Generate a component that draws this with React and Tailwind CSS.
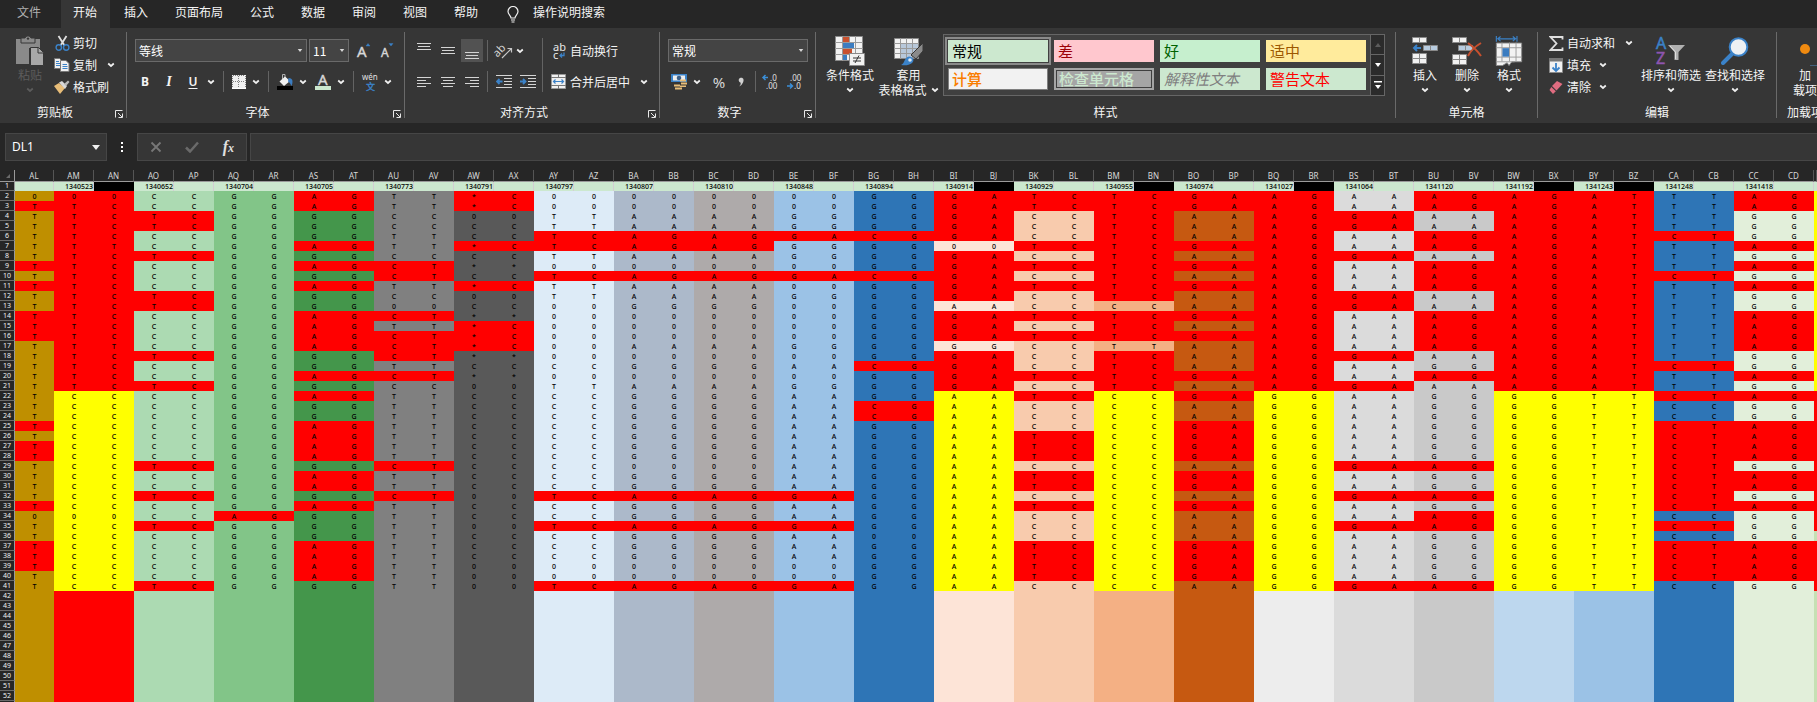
import React from 'react';

/* ---------- sheet data ---------- */

// Each track covers two columns; calls are run-length encoded from row 2 to row 41.
const TRACKS = [
  { cols: ['AM', 'AN'], pos: '1340523', black: true, base: 'bg-[#ff0000]', alt: true, calls: '00 TC4 TT TC9 TT TC4 CC12 00 CC7' },
  { cols: ['AO', 'AP'], pos: '1340652', base: 'bg-[#acdab2]', calls: 'CC2 TC2 CC2 TC CC3 TC2 CC4 TC CC2 TC CC7 TC CC2 TC CC2 TC CC5 TC' },
  { cols: ['AQ', 'AR'], pos: '1340704', base: 'bg-[#82c588]', calls: 'GG32 AG GG7' },
  { cols: ['AS', 'AT'], pos: '1340705', base: 'bg-[#44964b]', calls: 'AG2 GG3 AG GG AG GG AG GG2 AG4 GG2 AG GG AG GG2 AG4 GG AG2 GG AG GG3 AG4 GG' },
  { cols: ['AU', 'AV'], pos: '1340773', base: 'bg-[#808080]', calls: 'TT2 CC2 TT2 CC CT2 TT CC 00 CT TT CT3 TT CT CC TT7 CT TT2 CT TT9' },
  { cols: ['AW', 'AX'], pos: '1340791', base: 'bg-[#595959]', calls: '*C2 00 CC2 *C CC ** CC *C 00 CC ** *C3 ** CC ** 00 CC10 00 CC2 00 CC3 003' },
  { cols: ['AY', 'AZ'], pos: '1340797', base: 'bg-[#ddebf7]', calls: '002 TT2 TC2 TT 00 TC TT2 006 CC 00 TT CC10 TC CC2 TC CC3 002 TC' },
  { cols: ['BA', 'BB'], pos: '1340807', base: 'bg-[#acb9ca]', calls: '002 AA2 AG2 AA 00 AG AA2 GG 003 AA 00 GG 00 AA GG7 00 GG2 AG GG2 AG GG3 002 AG' },
  { cols: ['BC', 'BD'], pos: '1340810', base: 'bg-[#aeaaaa]', calls: '002 AA2 AG2 AA 00 AG AA2 GG 003 AA 00 GG 00 AA GG7 00 GG2 AG GG2 AG GG3 002 AG' },
  { cols: ['BE', 'BF'], pos: '1340848', base: 'bg-[#9bc2e6]', calls: '002 GG2 GA GG2 00 GA 00 GG 004 GG 00 AA 00 GG AA10 GA AA2 GA AA3 002 GA' },
  { cols: ['BG', 'BH'], pos: '1340894', base: 'bg-[#2e75b6]', calls: 'GG4 CG GG3 CG GG8 CG GG3 CG2 GG11 00 GG5' },
  { cols: ['BI', 'BJ'], pos: '1340914', black: true, base: 'bg-[#fde4d7]', alt: true, calls: 'GA5 00 GA5 AA GA3 GG GA4 AA20' },
  { cols: ['BK', 'BL'], pos: '1340929', base: 'bg-[#f8cbad]', calls: 'TC2 CC3 TC CC TC CC TC CC2 TC CC TC CC3 TC CC TC CC3 TC3 CC TC2 CC TC CC3 TC4 CC' },
  { cols: ['BM', 'BN'], pos: '1340955', black: true, base: 'bg-[#f4b084]', alt: true, calls: 'TC11 CC TC3 TT TC4 CC20' },
  { cols: ['BO', 'BP'], pos: '1340974', base: 'bg-[#c65911]', calls: 'GA2 AA3 GA AA GA AA GA AA2 GA AA GA AA3 GA AA GA AA2 GA4 AA GA2 AA GA AA3 GA4 AA' },
  { cols: ['BQ', 'BR'], pos: '1341027', black: true, base: 'bg-[#ededed]', alt: true, calls: 'AG20 GG20' },
  { cols: ['BS', 'BT'], pos: '1341064', base: 'bg-[#dbdbdb]', calls: 'AA2 GA2 AA2 GA AA3 GA2 AA4 GA AA2 GA AA7 GA AA2 GA AA2 GA AA5 GA' },
  { cols: ['BU', 'BV'], pos: '1341120', base: 'bg-[#c9c9c9]', calls: 'AG2 AA2 AG2 AA AG3 AA2 AG4 AA GG AG AA GG7 AG GG2 AG GG AG2 GG5 AG' },
  { cols: ['BW', 'BX'], pos: '1341192', black: true, base: 'bg-[#bdd7ee]', alt: true, calls: 'AG20 GG20' },
  { cols: ['BY', 'BZ'], pos: '1341243', black: true, base: 'bg-[#9bc2e6]', alt: true, calls: 'AT20 TT20' },
  { cols: ['CA', 'CB'], pos: '1341248', base: 'bg-[#2e75b6]', calls: 'TT4 CT TT3 CT TT8 CT TT2 CT CC2 CT9 CC CT CC CT4 CC' },
  { cols: ['CC', 'CD'], pos: '1341418', base: 'bg-[#e2efda]', calls: 'AG2 GG3 AG GG AG GG AG GG2 AG4 GG2 AG GG AG GG2 AG4 GG AG2 GG AG GG3 AG4 GG' },
];

const expand = (s) =>
  s.split(' ').flatMap((t) => Array(t.length > 2 ? Number(t.slice(2)) : 1).fill(t.slice(0, 2)));
const CALLS = TRACKS.map((t) => expand(t.calls));
const AL_RED = new Set([3, 9, 11, 14, 15, 16, 25, 27, 28, 33, 37, 38, 39]);
const RED = 'bg-[#ff0000]';
const YELLOW = 'bg-[#ffff00]';

function fill(track, call, row) {
  if (row > 41) return track.base;
  if (track.alt && row > 21) return YELLOW;
  return call[0] !== call[1] ? RED : track.base;
}

function lastFill(row) {
  if (row < 22) return YELLOW;
  if (row === 36 || row > 41) return 'bg-[#c6e0b4]';
  return RED;
}

function ColHead({ children }) {
  return (
    <th scope="col" className="h-3 border-r border-b border-r-[#555555] border-b-[#9a9a9a] p-0 text-center text-[8px] leading-[11px] font-normal text-[#d8d8d8]">
      {children}
    </th>
  );
}

function RowHead({ row, height }) {
  return (
    <th scope="row" className={`${height} border-r border-b border-r-[#9a9a9a] border-b-[#6a6a6a] bg-[#262626] p-0 text-center text-[7px] font-normal text-[#f0f0f0]`}>
      {row}
    </th>
  );
}

function Sheet() {
  const rows = Array.from({ length: 52 }, (_, i) => i + 2);
  return (
    <div className="min-h-0 flex-1 overflow-hidden">
      <table className="w-full min-w-[1816px] table-fixed border-separate border-spacing-0 font-['Noto_Sans',sans-serif] text-black">
        <colgroup>
          <col className="w-[15px]" />
          <col className="w-[39px]" />
          {TRACKS.flatMap((t) => t.cols).map((c) => <col key={c} className="w-10" />)}
          <col />
        </colgroup>
        <thead>
          <tr>
            <th aria-label="全选" className="h-3 border-r border-b border-[#9a9a9a] p-0">
              <svg viewBox="0 0 14 11" className="block h-[11px] w-[14px]"><path d="M10 4v4H6z" fill="#6a6a6a" /></svg>
            </th>
            <ColHead>AL</ColHead>
            {TRACKS.flatMap((t) => t.cols).map((c) => <ColHead key={c}>{c}</ColHead>)}
            <ColHead />
          </tr>
        </thead>
        <tbody>
          <tr className="bg-[#cce8cf] text-[7px] leading-[8px] font-medium">
            <RowHead row={1} height="h-[9px]" />
            <td className="border-r border-[#d4cdd4] p-0" />
            {TRACKS.map((t) => (
              <React.Fragment key={t.pos}>
                <td className="border-r border-[#d4cdd4] p-0 text-right">{t.pos}</td>
                <td className={t.black ? 'bg-black p-0' : 'border-r border-[#d4cdd4] p-0'} />
              </React.Fragment>
            ))}
            <td className="p-0" />
          </tr>
          {rows.map((row) => (
            <tr key={row} className="text-center text-[7px] leading-[9px] font-medium">
              <RowHead row={row} height="h-[10px]" />
              <td className={`p-0 ${AL_RED.has(row) ? RED : 'bg-[#bf8f00]'}`}>
                {row > 41 ? '' : row === 2 || row === 34 ? '0' : 'T'}
              </td>
              {TRACKS.map((t, i) => {
                const call = CALLS[i][row - 2] || '';
                const bg = fill(t, call, row);
                return (
                  <React.Fragment key={t.pos}>
                    <td className={`p-0 ${bg}`}>{call[0]}</td>
                    <td className={`p-0 ${bg}`}>{call[1]}</td>
                  </React.Fragment>
                );
              })}
              <td className={`p-0 ${lastFill(row)}`} />
            </tr>
          ))}
        </tbody>
      </table>
    </div>
  );
}

/* ---------- ribbon pieces ---------- */

function Chev({ dim }) {
  return (
    <svg viewBox="0 0 8 6" className="h-1.5 w-2 shrink-0">
      <path d="M1.2 1.5 4 4l2.8-2.5" fill="none" stroke={dim ? '#5c5c5c' : '#f0f0f0'} strokeWidth="1.7" />
    </svg>
  );
}

function Sep({ className = 'h-[21px]' }) {
  return <div className={`w-px shrink-0 bg-[#636363] ${className}`} />;
}

function Divider() {
  return <div className="mt-1 mb-[5px] w-px shrink-0 bg-[#6a6a6a]" />;
}

function Group({ label, launcher, className, children }) {
  return (
    <section aria-label={label} className={`flex shrink-0 flex-col ${className}`}>
      <div className="flex h-[74px] items-start">{children}</div>
      <div className="flex h-5 items-center">
        <span className={`flex-1 text-center ${launcher ? 'pr-[5px]' : ''}`}>{label}</span>
        {launcher && (
          <button type="button" aria-label={`${label}设置`} className="mr-[3px] pt-1">
            <svg viewBox="0 0 8 8" className="h-2 w-2" fill="none" stroke="#e8e8e8">
              <path d="M.5 7.5v-7h7M3 3l4 4M7.5 3.5v4h-4" />
            </svg>
          </button>
        )}
      </div>
    </section>
  );
}

function Split({ label, gap = 'gap-1.5', className = '', children }) {
  return (
    <button type="button" aria-label={label} className={`flex shrink-0 items-center ${gap} ${className}`}>
      {children}
      <Chev />
    </button>
  );
}

function Combo({ label, options, className }) {
  return (
    <div className={`relative flex h-[23px] ${className}`}>
      <select aria-label={label} className="w-full appearance-none border border-[#6a6a6a] bg-[#444444] pl-[3px] text-[12px] leading-5 text-white">
        {options.map((o) => <option key={o}>{o}</option>)}
      </select>
      <svg viewBox="0 0 6 4" className="pointer-events-none absolute top-[10px] right-[4px] h-[3px] w-[6px]"><path d="M0 0h6L3 4z" fill="#d8d8d8" /></svg>
    </div>
  );
}

function Lines({ rows, color = '#d4d4d4' }) {
  return (
    <svg viewBox="0 0 14 16" className="h-4 w-[14px]" shapeRendering="crispEdges" fill={color}>
      {rows.map(([x, y, w]) => <rect key={y} x={x} y={y} width={w} height="1" />)}
    </svg>
  );
}

function BigButton({ label, lines, chevInline, dim, className, children }) {
  return (
    <button type="button" aria-label={label} className={`mt-2 flex shrink-0 flex-col items-center whitespace-nowrap ${dim ? 'text-[#5c5c5c]' : ''} ${className}`}>
      <span className="mb-px flex h-[30px] items-center justify-center">{children}</span>
      <span className="leading-[15px]">{lines[0]}</span>
      {lines[1] ? (
        <span className="flex items-center gap-1 leading-[15px]">{lines[1]}{chevInline && <Chev />}</span>
      ) : (
        <span className="flex h-[15px] items-center"><Chev dim={dim} /></span>
      )}
    </button>
  );
}

function RowButton({ icon, chev, gap = 'gap-2', children }) {
  return (
    <button type="button" className={`flex h-[22px] items-center ${gap}`}>
      <span className="flex items-center gap-[3px]">
        <span className="flex w-4 justify-center">{icon}</span>
        <span>{children}</span>
      </span>
      {chev && <Chev />}
    </button>
  );
}

/* ---------- icons ---------- */

const PasteIcon = () => (
  <svg viewBox="0 0 28 30" className="h-[30px] w-7">
    <path d="M0 3h24v9H13v16H0z" fill="#8a8a8a" />
    <path d="M5 2h4a3.2 3.2 0 0 1 6 0h4v5H5z" fill="#8a8a8a" stroke="#363636" />
    <circle cx="12" cy="2.6" r="1.2" fill="#363636" />
    <path d="M14.5 11.5h8l5 5v13h-13z" fill="#a8a8a8" stroke="#363636" />
    <path d="M22 11.5V17h5.500" fill="none" stroke="#363636" />
  </svg>
);
const CutIcon = () => (
  <svg viewBox="0 0 15 16" className="h-4 w-[15px]" fill="none">
    <path d="M3.500 1 9.500 10.500M11.500 1 5.500 10.500" stroke="#e0e0e0" strokeWidth="1.800" />
    <circle cx="3.800" cy="12.500" r="2.700" stroke="#3b82c8" strokeWidth="1.400" />
    <circle cx="11.200" cy="12.500" r="2.700" stroke="#3b82c8" strokeWidth="1.400" />
  </svg>
);
const CopyIcon = () => (
  <svg viewBox="0 0 16 14" className="h-[14px] w-4">
    <path d="M.5.5h5l2.500 2.500v7.500h-7.500z" fill="#f0f0f0" stroke="#777" />
    <path d="M2 3.500h3M2 5.500h4M2 7.500h4" stroke="#3b82c8" />
    <path d="M6.500 2.500h5.500l3 3v8h-8.500z" fill="#f0f0f0" stroke="#777" />
    <path d="M8.500 6.500h4.500M8.500 8.500h5M8.500 10.500h5" stroke="#3b82c8" />
  </svg>
);
const PainterIcon = () => (
  <svg viewBox="0 0 16 14" className="h-[14px] w-4">
    <path d="M0 6 5 3l6 5-5 6z" fill="#e8bd78" />
    <path d="M5 2.500 8 1l5 5-2 3z" fill="#d8d8d8" />
    <path d="m10 4 4-3.500L15.500 2 12 6z" fill="#b8b8b8" />
  </svg>
);
const BordersIcon = () => (
  <svg viewBox="0 0 14 14" className="h-[14px] w-[14px]" shapeRendering="crispEdges">
    <path d="M0 0h14v14H0z" fill="#f0f0f0" />
    <path d="M1 .5h12M1 6.500h12M.5 1v11M6.500 1v11M13.500 1v11" stroke="#808080" strokeDasharray="1 1" />
    <path d="M0 13.500h14" stroke="#fff" />
  </svg>
);
const FillIcon = () => (
  <svg viewBox="0 0 16 16" className="h-4 w-4">
    <path d="M5.500 5V.5H8V5" fill="none" stroke="#b0b0b0" />
    <path d="M8 2.500 13 7l-6 5L2.500 7.500z" fill="#f0f0f0" />
    <path d="M11.500 4c4 0 5 3 3 8-1-2-1.500-3-3.500-4.500z" fill="#3b7cc0" />
    <path d="M0 12h16v4H0z" fill="#000" />
  </svg>
);
const CurrencyIcon = () => (
  <svg viewBox="0 0 16 16" className="h-4 w-4">
    <path d="M0 0h16v8H0z" fill="#3b82c8" /><path d="M2 1.500h12v5H2z" fill="#eee" />
    <circle cx="8" cy="4" r="2.300" fill="#3b5f88" />
    <path d="M9 5.500h6v2H9zM10 8.500h6v2h-6zM3 10.500h6v2H3zM4 13.500h7v2H4zM9 11.500h6v1.500H9z" fill="#e8bd78" />
  </svg>
);
const Decimal = ({ inc }) => (
  <svg viewBox="0 0 16 16" className="h-4 w-4 overflow-visible font-['Noto_Sans',sans-serif]" fill="#e0e0e0" fontSize="8">
    {inc ? (
      <>
        <path d="M6 3.500H1M3.500 1l-2.500 2.500 2.500 2.500" fill="none" stroke="#3b8fd8" strokeWidth="1.500" />
        <text x="8" y="7">.0</text><text x="4" y="15">.00</text>
      </>
    ) : (
      <>
        <path d="M1 12h5.500M4 9.500l2.500 2.500L4 14.500" fill="none" stroke="#3b8fd8" strokeWidth="1.500" />
        <text x="4" y="7">.00</text><text x="8" y="15">.0</text>
      </>
    )}
  </svg>
);
const Indent = ({ left }) => (
  <svg viewBox="0 0 16 14" className="h-[14px] w-4">
    <path d="M0 .5h16M8 3.500h8M8 6.500h8M8 9.500h8M0 12.500h16" stroke="#d4d4d4" />
    <path d={left ? 'M6.500 6.500H1M3.500 4 1 6.500 3.500 9' : 'M0 6.500h5.500M3 4l2.500 2.500L3 9'} fill="none" stroke="#3b82c8" strokeWidth="1.800" />
  </svg>
);
const MergeIcon = () => (
  <svg viewBox="0 0 16 16" className="h-4 w-4">
    <path d="M.5.5h14v14H.5z" fill="#f0f0f0" stroke="#999" />
    <path d="M0 3.500h15M0 11.500h15M7.500 0v3M7.500 12v3" stroke="#777" />
    <path d="M2.500 7.500h10M4.500 5.500l-2 2 2 2M10.500 5.500l2 2-2 2" fill="none" stroke="#3b82c8" strokeWidth="1.200" />
  </svg>
);
const WrapIcon = () => (
  <svg viewBox="0 0 13 16" className="h-4 w-[13px] overflow-visible font-['Noto_Sans',sans-serif]" fill="#e8e8e8" fontSize="11">
    <text x="0" y="8">ab</text><text x="0" y="16">c</text>
    <path d="M11 9.500v3H7M9 10.500l-2 2 2 2" fill="none" stroke="#3b82c8" strokeWidth="1.300" />
  </svg>
);
const OrientIcon = () => (
  <svg viewBox="0 0 16 16" className="h-4 w-4 overflow-visible font-['Noto_Sans',sans-serif]" fill="#d8d8d8" fontSize="11">
    <text x="-2" y="11" transform="rotate(-45 4 9)">ab</text>
    <path d="M6 15 15 6M11.500 5.500h4v4" fill="none" stroke="#c8c8c8" strokeWidth="1.200" />
  </svg>
);
const CondIcon = () => (
  <svg viewBox="0 0 30 30" className="h-[30px] w-[30px]">
    <path d="M.5.5h27v24H.5z" fill="#f2f2f2" stroke="#8a8a8a" />
    <path d="M0 6.500h28M0 12.500h28M0 18.500h28M7.500 0v25M14.500 0v25M20.500 0v25" stroke="#9a9a9a" fill="none" />
    <path d="M8 1h6v5H8zM8 13h9v5H8z" fill="#c8502e" /><path d="M8 7h11v5H8zM8 19h4v5H8z" fill="#3b7cc0" />
    <path d="M14.500 17.500h15v12h-15z" fill="#f2f2f2" stroke="#8a8a8a" />
    <path d="M18 22h8M18 25h8M24 19.500l-4 7.500" stroke="#333" />
  </svg>
);
const TableIcon = () => (
  <svg viewBox="0 0 30 30" className="h-[30px] w-[30px]">
    <path d="M.5 2.500h24v20H.5z" fill="#f2f2f2" stroke="#8a8a8a" />
    <path d="M7 8h17v14H7z" fill="#b8c8da" />
    <path d="M0 7.500h25M0 12.500h25M0 17.500h25M6.500 2v21M12.500 2v21M18.500 2v21" stroke="#9a9a9a" fill="none" />
    <path d="M29 7v8l-7 8-5-4z" fill="#8a8a8a" stroke="#363636" />
    <path d="M7 29c4-1 3-8 8-8.500 4 0 6 4 3 6.500s-7 2.500-11 2z" fill="#3b82c8" /><circle cx="16" cy="24" r="1.800" fill="#dceaf6" />
  </svg>
);
const Mini = ({ x, y, blue, n = 2 }) => (
  <g>
    <path d={`M${x + 0.5} ${y + 0.5}h${n * 7}v5h-${n * 7}z`} fill={blue ? '#b8cce0' : '#f2f2f2'} stroke="#8a8a8a" />
    <path d={`M${x + 7.5} ${y}v6`} stroke="#8a8a8a" />
  </g>
);
const InsertIcon = () => (
  <svg viewBox="0 0 26 28" className="h-7 w-[26px]">
    <Mini x={0} y={0} /><Mini x={11} y={8} blue /><Mini x={0} y={16} /><Mini x={0} y={21} />
    <path d="M9 11H2M5 8l-3 3 3 3" fill="none" stroke="#3b82c8" strokeWidth="2" />
  </svg>
);
const DeleteIcon = () => (
  <svg viewBox="0 0 30 28" className="h-7 w-[30px]">
    <Mini x={0} y={0} /><Mini x={6} y={8} blue /><Mini x={0} y={17} /><Mini x={0} y={22} />
    <path d="M16 6c4 3 9 7 13 13M29 6c-5 3-10 7-13 13" fill="none" stroke="#c8502e" strokeWidth="2" />
  </svg>
);
const FormatIcon = () => (
  <svg viewBox="0 0 28 32" className="h-[30px] w-7">
    <path d="M.5 0v6M22.500 0v6M2 3h19M5 .5 2 3l3 2.500M18 .5 21 3l-3 2.500" fill="none" stroke="#3b82c8" strokeWidth="1.200" />
    <path d="M.5 7.500h27v20H17l-3 4-2-3-5 3H.5z" fill="#f2f2f2" stroke="#8a8a8a" />
    <path d="M0 12.500h28M0 22.500h28M0 27.500h20M6.500 7v20M14.500 7v20M21.500 7v20" fill="none" stroke="#9a9a9a" />
    <path d="M7 13h7v9H7z" fill="#3b7cc0" />
  </svg>
);
const SumIcon = () => (
  <svg viewBox="0 0 15 15" className="h-[15px] w-[15px]"><path d="M13.500 3.500V1H1.500l6 6.500-6 6.500h12v-2.500" fill="none" stroke="#e0e0e0" strokeWidth="1.800" /></svg>
);
const DownIcon = () => (
  <svg viewBox="0 0 14 15" className="h-[15px] w-[14px]">
    <path d="M.5.5h13v14H.5z" fill="#f2f2f2" stroke="#8a8a8a" /><path d="M0 0h14v3.500H0z" fill="#777" />
    <path d="M7 5v8M3.500 9.500 7 13l3.500-3.500" fill="none" stroke="#3b82c8" strokeWidth="1.800" />
  </svg>
);
const EraserIcon = () => (
  <svg viewBox="0 0 14 13" className="h-[13px] w-[14px]">
    <path d="m8 0 5.500 3-6 6.500L3 5z" fill="#e06c80" /><path d="m2.300 6 4.500 4.200L4 13 .5 9z" fill="#e06c80" />
  </svg>
);
const SortIcon = () => (
  <svg viewBox="0 0 30 28" className="h-7 w-[30px] overflow-visible font-['Noto_Sans',sans-serif]" fontSize="16" strokeWidth=".5">
    <text x="0" y="12" fill="#3b82c8" stroke="#3b82c8">A</text><text x="0" y="27" fill="#8e55b0" stroke="#8e55b0">Z</text>
    <path d="M12 8h17l-6.500 7v8h-4v-8z" fill="#b0b0b0" /><path d="m14 9 5.500 6v7" fill="none" stroke="#e0e0e0" strokeWidth="1" />
  </svg>
);
const FindIcon = () => (
  <svg viewBox="0 0 28 28" className="h-7 w-7">
    <path d="m11 17-9 9" stroke="#3b82c8" strokeWidth="4" strokeLinecap="round" />
    <circle cx="17.500" cy="10" r="8.800" fill="#eef1f4" stroke="#3b82c8" strokeWidth="2" />
  </svg>
);

/* ---------- ribbon ---------- */

const TABS = ['插入', '页面布局', '公式', '数据', '审阅', '视图', '帮助'];

function TabBar() {
  return (
    <nav className="flex h-7 shrink-0 items-stretch gap-px whitespace-nowrap">
      <a href="#file" className="flex w-[60px] items-center pb-1 pl-[17px] text-[#b0b0b0]">文件</a>
      <a href="#home" aria-current="page" className="flex w-[49px] items-center bg-[#363636] pb-1 pl-3">开始</a>
      {TABS.map((t) => (
        <a key={t} href={`#${t}`} className="flex items-center px-[13px] pb-1">{t}</a>
      ))}
      <button type="button" className="ml-[15px] flex items-center gap-[14px] pb-1">
        <svg viewBox="0 0 12 17" className="mt-1 h-[17px] w-3" fill="none" stroke="#f0f0f0" strokeWidth="1.200">
          <path d="M4 12c0-2.500-3-3.500-3-6.500a5 5 0 0 1 10 0c0 3-3 4-3 6.500zM4 14h4M4.500 16h3" />
        </svg>
        操作说明搜索
      </button>
    </nav>
  );
}

const CELL = 'flex h-[22px] items-center px-1 text-left text-[15px] leading-[22px] whitespace-nowrap';

function Gallery() {
  return (
    <div className="mt-1.5 flex h-[62px] border border-[#666666] bg-[#404040]">
      <div className="grid grid-cols-[repeat(4,100px)] content-start gap-1.5 px-1 pt-[5px]">
        <button type="button" className={`${CELL} bg-[#cce8cf] text-black outline-2 outline-offset-1 outline-[#8a8a8a]`}>常规</button>
        <button type="button" className={`${CELL} bg-[#ffc7ce] text-[#9c0006]`}>差</button>
        <button type="button" className={`${CELL} bg-[#c6efce] text-[#006100]`}>好</button>
        <button type="button" className={`${CELL} bg-[#ffeb9c] text-[#9c5700]`}>适中</button>
        <button type="button" className={`${CELL} border border-[#7f7f7f] bg-[#f2f2f2] !px-[3px] font-medium text-[#fa7d00]`}>计算</button>
        <button type="button" className={`${CELL} border-3 border-double border-[#3f3f3f] bg-[#a5a5a5] !px-0.5 font-medium !leading-4 text-[#cce8cf] outline outline-[#a5a5a5] -outline-offset-1`}>检查单元格</button>
        <button type="button" className={`${CELL} bg-[#cce8cf] text-[#7f7f7f] italic`}>解释性文本</button>
        <button type="button" className={`${CELL} bg-[#cce8cf] text-[#ff0000]`}>警告文本</button>
      </div>
      <div className="flex w-[14px] flex-col divide-y divide-[#666666] border-l border-[#666666] bg-[#2b2b2b]">
        <button type="button" aria-label="上一行" className="flex flex-1 items-center justify-center"><svg viewBox="0 0 6 4" className="h-1 w-1.5"><path d="M3 0 6 4H0z" fill="#5c5c5c" /></svg></button>
        <button type="button" aria-label="下一行" className="flex flex-1 items-center justify-center"><svg viewBox="0 0 6 4" className="h-1 w-1.5"><path d="M0 0h6L3 4z" fill="#fff" /></svg></button>
        <button type="button" aria-label="更多样式" className="flex flex-1 items-center justify-center"><svg viewBox="0 0 8 8" className="h-2 w-2"><path d="M0 0h8v1.500H0zM1 4h6L4 8z" fill="#fff" /></svg></button>
      </div>
    </div>
  );
}

function Ribbon() {
  return (
    <div className="flex h-[95px] shrink-0 overflow-hidden bg-[#363636] whitespace-nowrap">
      <Group label="剪贴板" launcher className="w-[126px]">
        <BigButton label="粘贴" lines={['粘贴']} dim className="ml-4 w-7"><PasteIcon /></BigButton>
        <div className="ml-2.5 flex flex-col items-start pt-1">
          <RowButton icon={<CutIcon />}>剪切</RowButton>
          <RowButton icon={<CopyIcon />} chev gap="gap-2.5">复制</RowButton>
          <RowButton icon={<PainterIcon />}>格式刷</RowButton>
        </div>
      </Group>
      <Divider />
      <Group label="字体" launcher className="w-[277px]">
        <div className="flex flex-col gap-2 pt-[11px]">
          <div className="flex h-[23px] items-center gap-0.5 pl-2">
            <Combo label="字体名称" options={['等线']} className="w-[172px]" />
            <Combo label="字号" options={['11']} className="w-10" />
            <button type="button" aria-label="增大字号" className="ml-1.5 w-[14px]">
              <svg viewBox="0 0 14 16" className="h-4 w-[14px] overflow-visible font-['Noto_Sans',sans-serif]" fill="#d8d8d8" stroke="#d8d8d8" strokeWidth=".4" fontSize="15"><text x="0" y="14">A</text><path d="M9 3h4l-2-2.500z" fill="#3b82c8" stroke="#3b82c8" /></svg>
            </button>
            <button type="button" aria-label="减小字号" className="ml-2 w-[14px]">
              <svg viewBox="0 0 14 16" className="h-4 w-[14px] overflow-visible font-['Noto_Sans',sans-serif]" fill="#d8d8d8" stroke="#d8d8d8" strokeWidth=".4" fontSize="12"><text x="0" y="14">A</text><path d="M8 .5h4L10 3z" fill="#3b82c8" stroke="#3b82c8" /></svg>
            </button>
          </div>
          <div className="flex h-[23px] items-center pl-2.5 font-['Noto_Sans',sans-serif]">
            <button type="button" className="w-4 font-bold">B</button>
            <button type="button" className="ml-2 w-4 font-['Liberation_Serif',serif] text-sm font-bold italic">I</button>
            <Split label="下划线" className="ml-2"><span className="w-4 font-semibold underline underline-offset-2">U</span></Split>
            <Sep className="ml-2 h-[21px]" />
            <Split label="边框" className="ml-2"><BordersIcon /></Split>
            <Sep className="ml-2 h-[21px]" />
            <Split label="填充颜色" className="ml-2"><FillIcon /></Split>
            <Split label="字体颜色" className="ml-2">
              <svg viewBox="0 0 16 17" className="h-[17px] w-4 overflow-visible" fill="#d8d8d8" fontSize="15"><text x="3" y="12" stroke="#d8d8d8" strokeWidth=".4">A</text><path d="M0 13h16v4H0z" fill="#cce8cf" /></svg>
            </Split>
            <Sep className="ml-2 h-[21px]" />
            <Split label="拼音" className="ml-2">
              <svg viewBox="0 0 16 18" className="h-[18px] w-4 overflow-visible font-['Noto_Sans','Noto_Sans_CJK_SC',sans-serif]" fill="#e0e0e0" fontSize="8"><text x="0" y="7">wén</text><text x="4" y="17" fill="#3b82c8" stroke="#3b82c8" strokeWidth=".4" fontSize="9">文</text></svg>
            </Split>
          </div>
        </div>
      </Group>
      <Divider />
      <Group label="对齐方式" launcher className="w-[254px]">
        <div className="flex w-[137px] flex-col gap-2 pt-[11px]">
          <div className="flex h-[23px] items-center pl-3">
            <button type="button" aria-label="顶端对齐"><Lines rows={[[0, 0, 14], [1, 3, 12], [0, 6, 14]]} /></button>
            <button type="button" aria-label="垂直居中" className="ml-2.5"><Lines rows={[[0, 4, 14], [1, 7, 12], [0, 10, 14]]} /></button>
            <button type="button" aria-label="底端对齐" className="ml-1.5 flex h-[23px] w-[22px] items-center justify-center bg-[#525252]"><Lines rows={[[0, 9, 14], [1, 12, 12], [0, 15, 14]]} /></button>
            <Sep className="ml-1 h-[21px]" />
            <Split label="方向" gap="gap-1" className="ml-2"><OrientIcon /></Split>
          </div>
          <div className="flex h-[23px] items-center pl-3">
            <button type="button" aria-label="左对齐"><Lines rows={[[0, 3, 14], [0, 6, 9], [0, 9, 14], [0, 12, 9]]} /></button>
            <button type="button" aria-label="居中" className="ml-2.5"><Lines rows={[[0, 3, 14], [2, 6, 10], [0, 9, 14], [2, 12, 10]]} /></button>
            <button type="button" aria-label="右对齐" className="ml-2.5"><Lines rows={[[0, 3, 14], [5, 6, 9], [0, 9, 14], [5, 12, 9]]} /></button>
            <Sep className="ml-2 h-[21px]" />
            <button type="button" aria-label="减少缩进量" className="ml-2"><Indent left /></button>
            <button type="button" aria-label="增加缩进量" className="ml-2"><Indent /></button>
          </div>
        </div>
        <Sep className="mt-2.5 h-[54px]" />
        <div className="flex flex-col items-start gap-2 pt-[11px] pl-2">
          <button type="button" className="flex h-[23px] items-center gap-[3px]"><span className="flex w-4 justify-center"><WrapIcon /></span>自动换行</button>
          <Split label="合并后居中" gap="gap-2.5" className="h-[23px]"><span className="flex items-center gap-[3px]"><MergeIcon />合并后居中</span></Split>
        </div>
      </Group>
      <Divider />
      <Group label="数字" launcher className="w-[155px]">
        <div className="flex flex-col gap-2 pt-[11px] pl-2">
          <Combo label="数字格式" options={['常规']} className="w-[140px]" />
          <div className="flex h-[23px] items-center pl-[3px] font-['Noto_Sans',sans-serif]">
            <Split label="会计数字格式"><CurrencyIcon /></Split>
            <button type="button" className="ml-2.5 w-4 text-[15px] text-[#d8d8d8]">%</button>
            <button type="button" aria-label="千位分隔样式" className="ml-2.5 w-2">
              <svg viewBox="0 0 8 10" className="h-2.5 w-2"><path d="M3 1c3-1 4.500 1.500 3 4.500C5 7.500 4 8.500 2 9.500c1.500-1.500 2-2.500 1.500-4C1.500 5 1 2 3 1z" fill="#d0d0d0" /></svg>
            </button>
            <Sep className="ml-2.5 h-[21px]" />
            <button type="button" aria-label="增加小数位数" className="ml-1.5"><Decimal inc /></button>
            <button type="button" aria-label="减少小数位数" className="ml-2"><Decimal /></button>
          </div>
        </div>
      </Group>
      <Divider />
      <Group label="样式" className="w-[579px]">
        <BigButton label="条件格式" lines={['条件格式']} className="ml-1.5 w-14"><CondIcon /></BigButton>
        <BigButton label="套用表格格式" lines={['套用', '表格格式']} chevInline className="mr-1 w-[61px]"><TableIcon /></BigButton>
        <Gallery />
      </Group>
      <Divider />
      <Group label="单元格" className="w-[141px]">
        <BigButton label="插入" lines={['插入']} className="ml-2 w-[42px]"><InsertIcon /></BigButton>
        <BigButton label="删除" lines={['删除']} className="w-[42px]"><DeleteIcon /></BigButton>
        <BigButton label="格式" lines={['格式']} className="w-[42px]"><FormatIcon /></BigButton>
      </Group>
      <Divider />
      <Group label="编辑" className="w-[238px]">
        <div className="ml-2.5 flex w-[87px] flex-col items-start pt-1">
          <RowButton icon={<SumIcon />} chev gap="gap-2.5">自动求和</RowButton>
          <RowButton icon={<DownIcon />} chev>填充</RowButton>
          <RowButton icon={<EraserIcon />} chev>清除</RowButton>
        </div>
        <BigButton label="排序和筛选" lines={['排序和筛选']} className="ml-1 w-16"><SortIcon /></BigButton>
        <BigButton label="查找和选择" lines={['查找和选择']} className="w-16"><FindIcon /></BigButton>
      </Group>
      <Divider />
      <Group label="加载项" className="w-14">
        <BigButton label="加载项" lines={['加', '载项']} className="w-14">
          <svg viewBox="0 0 30 30" className="h-[30px] w-[30px]"><circle cx="15" cy="13" r="5" fill="#f08a10" /><path d="M20 29.500h10" stroke="#44607c" /></svg>
        </BigButton>
      </Group>
    </div>
  );
}

function FormulaBar() {
  return (
    <div className="flex h-[47px] shrink-0 items-start pt-2.5 pl-[5px]">
      <div className="flex h-7 w-[102px] items-center border border-[#464646] bg-[#363636] pr-1.5 pl-1.5">
        <input aria-label="名称框" defaultValue="DL1" className="w-full min-w-0 bg-transparent font-['Noto_Sans',sans-serif] text-[12px] text-white" />
        <button type="button" aria-label="展开名称列表"><svg viewBox="0 0 8 5" className="h-[5px] w-2"><path d="M0 0h8L4 5z" fill="#f0f0f0" /></svg></button>
      </div>
      <div className="flex h-7 w-[30px] flex-col items-center justify-center gap-0.5">
        <i className="size-0.5 bg-white" /><i className="size-0.5 bg-white" /><i className="size-0.5 bg-white" />
      </div>
      <div className="flex h-7 w-[110px] items-center justify-between border border-[#464646] bg-[#363636] px-3">
        <button type="button" aria-label="取消"><svg viewBox="0 0 12 12" className="h-3 w-3"><path d="m1.500 1.500 9 9M10.500 1.500l-9 9" stroke="#777" strokeWidth="1.800" /></svg></button>
        <button type="button" aria-label="输入"><svg viewBox="0 0 14 12" className="h-3 w-[14px]"><path d="m1 6.500 4 4 8-9" fill="none" stroke="#6a6a6a" strokeWidth="2.500" /></svg></button>
        <button type="button" className="font-['Liberation_Serif',serif] text-base leading-4 font-bold text-[#e0e0e0] italic">f<span className="text-xs">x</span></button>
      </div>
      <input aria-label="编辑栏" className="ml-[3px] h-7 min-w-0 flex-1 border border-r-0 border-[#464646] bg-[#363636] px-2 text-white" />
    </div>
  );
}

export default function App() {
  return (
    <div className="flex h-screen flex-col overflow-hidden bg-[#262626] font-['Noto_Sans_CJK_SC',sans-serif] text-[12px] leading-4 text-[#f4f4f4]">
      <TabBar />
      <Ribbon />
      <FormulaBar />
      <Sheet />
    </div>
  );
}
